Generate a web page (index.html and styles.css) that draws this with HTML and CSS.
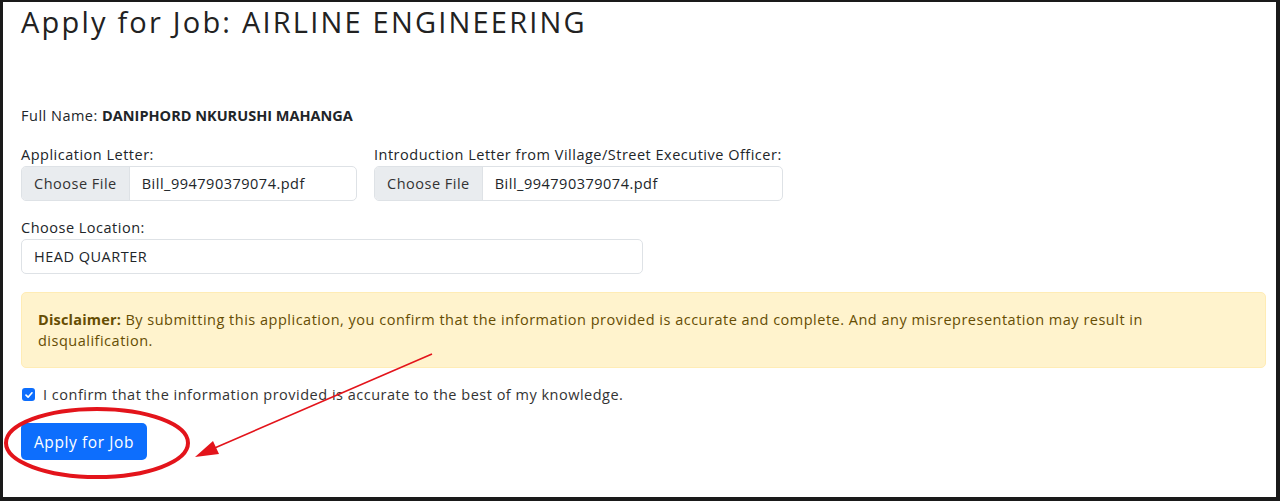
FILE: index.html
```html
<!DOCTYPE html>
<html lang="en">
  <head>
    <meta charset="utf-8" />
    <title>Apply for Job</title>
    <link rel="stylesheet" href="styles.css">
  </head>
  <body>
    <div class="frame">
      <h1>Apply for Job: AIRLINE ENGINEERING</h1>

      <form class="apply-form">
        <p class="full-name">Full Name: <strong>DANIPHORD NKURUSHI MAHANGA</strong></p>

        <div class="file-row">
          <div class="field field-app">
            <label>Application Letter:</label>
            <div class="file-input">
              <span class="file-btn">Choose File</span>
              <span class="file-name">Bill_994790379074.pdf</span>
            </div>
          </div>
          <div class="field field-intro">
            <label>Introduction Letter from Village/Street Executive Officer:</label>
            <div class="file-input">
              <span class="file-btn">Choose File</span>
              <span class="file-name">Bill_994790379074.pdf</span>
            </div>
          </div>
        </div>

        <div class="field field-location">
          <label>Choose Location:</label>
          <div class="select-box">HEAD QUARTER</div>
        </div>

        <div class="alert">
          <p><strong>Disclaimer:</strong> By submitting this application, you confirm that the information provided is accurate and complete. And any misrepresentation may result in disqualification.</p>
        </div>

        <div class="check-row">
          <span class="check-box">
            <svg width="10" height="10" viewBox="0 0 10 10"><path d="M2 5.2 L4.1 7.2 L8 2.8" fill="none" stroke="#fff" stroke-width="1.7" stroke-linecap="round" stroke-linejoin="round"/></svg>
          </span>
          <span>I confirm that the information provided is accurate to the best of my knowledge.</span>
        </div>

        <button type="button" class="btn-apply">Apply for Job</button>
      </form>

      <svg class="annotation" width="1280" height="501" viewBox="0 0 1280 501">
        <ellipse cx="97" cy="443" rx="91" ry="34" fill="none" stroke="#e3141b" stroke-width="4"/>
        <line x1="432" y1="354" x2="210" y2="450" stroke="#e3141b" stroke-width="1.6"/>
        <polygon points="195,457 213,441 219,454" fill="#e3141b"/>
      </svg>
    </div>
  </body>
</html>
```

FILE: styles.css
```css
* {
  box-sizing: border-box;
}

body {
  margin: 0;
  font-family: 'Open Sans', 'Noto Sans', sans-serif;
  color: #212529;
  background-color: #fff;
}

.frame {
  position: relative;
  width: 1280px;
  height: 501px;
  border-style: solid;
  border-color: #1a1a1a;
  border-width: 2px 4px 4px 3px;
  padding: 0 10px 0 18px;
  overflow: hidden;
}

h1 {
  margin: 0;
  padding-top: 2px;
  font-size: 29px;
  line-height: 36px;
  font-weight: 400;
  letter-spacing: 2.2px;
  color: #222;
}

.apply-form {
  margin-top: 65px;
  font-size: 14.5px;
  letter-spacing: 0.5px;
}

.full-name {
  margin: 0 0 18px 0;
  line-height: 22px;
}

.full-name strong {
  font-weight: 700;
  letter-spacing: 0;
}

.file-row {
  display: flex;
  gap: 17px;
}

.field label {
  display: block;
  margin-bottom: 1px;
  line-height: 20px;
}

.field-app {
  width: 336px;
}

.field-intro {
  width: 409px;
}

.file-input {
  display: flex;
  height: 35px;
  border: 1px solid #dee2e6;
  border-radius: 5px;
  overflow: hidden;
  line-height: 33px;
}

.file-btn {
  background-color: #e9ecef;
  border-right: 1px solid #dee2e6;
  padding: 0 12px;
  color: #333;
}

.file-name {
  padding: 0 12px;
}

.field-location {
  margin-top: 17px;
  width: 622px;
}

.select-box {
  height: 35px;
  border: 1px solid #dee2e6;
  border-radius: 5px;
  padding: 0 12px;
  line-height: 33px;
}

.alert {
  margin-top: 18px;
  width: 1245px;
  background-color: #fff3cd;
  border: 1px solid #ffecb5;
  border-radius: 5px;
  color: #664d03;
  padding: 16px;
  line-height: 21px;
}

.alert p {
  margin: 0;
}

.alert strong {
  font-weight: 700;
  letter-spacing: 0.2px;
}

.check-row {
  display: flex;
  align-items: center;
  gap: 8px;
  margin-top: 17px;
  padding-left: 1px;
  color: #333;
}

.check-box {
  display: inline-flex;
  align-items: center;
  justify-content: center;
  width: 13px;
  height: 13px;
  border-radius: 3px;
  background-color: #0d6efd;
}

.btn-apply {
  margin-top: 19px;
  background-color: #0d6efd;
  color: #fff;
  border: none;
  border-radius: 5px;
  font-family: inherit;
  font-size: 15.5px;
  letter-spacing: 0.6px;
  height: 37px;
  width: 126px;
  cursor: pointer;
}

.annotation {
  position: absolute;
  left: -3px;
  top: -2px;
  pointer-events: none;
}
```
